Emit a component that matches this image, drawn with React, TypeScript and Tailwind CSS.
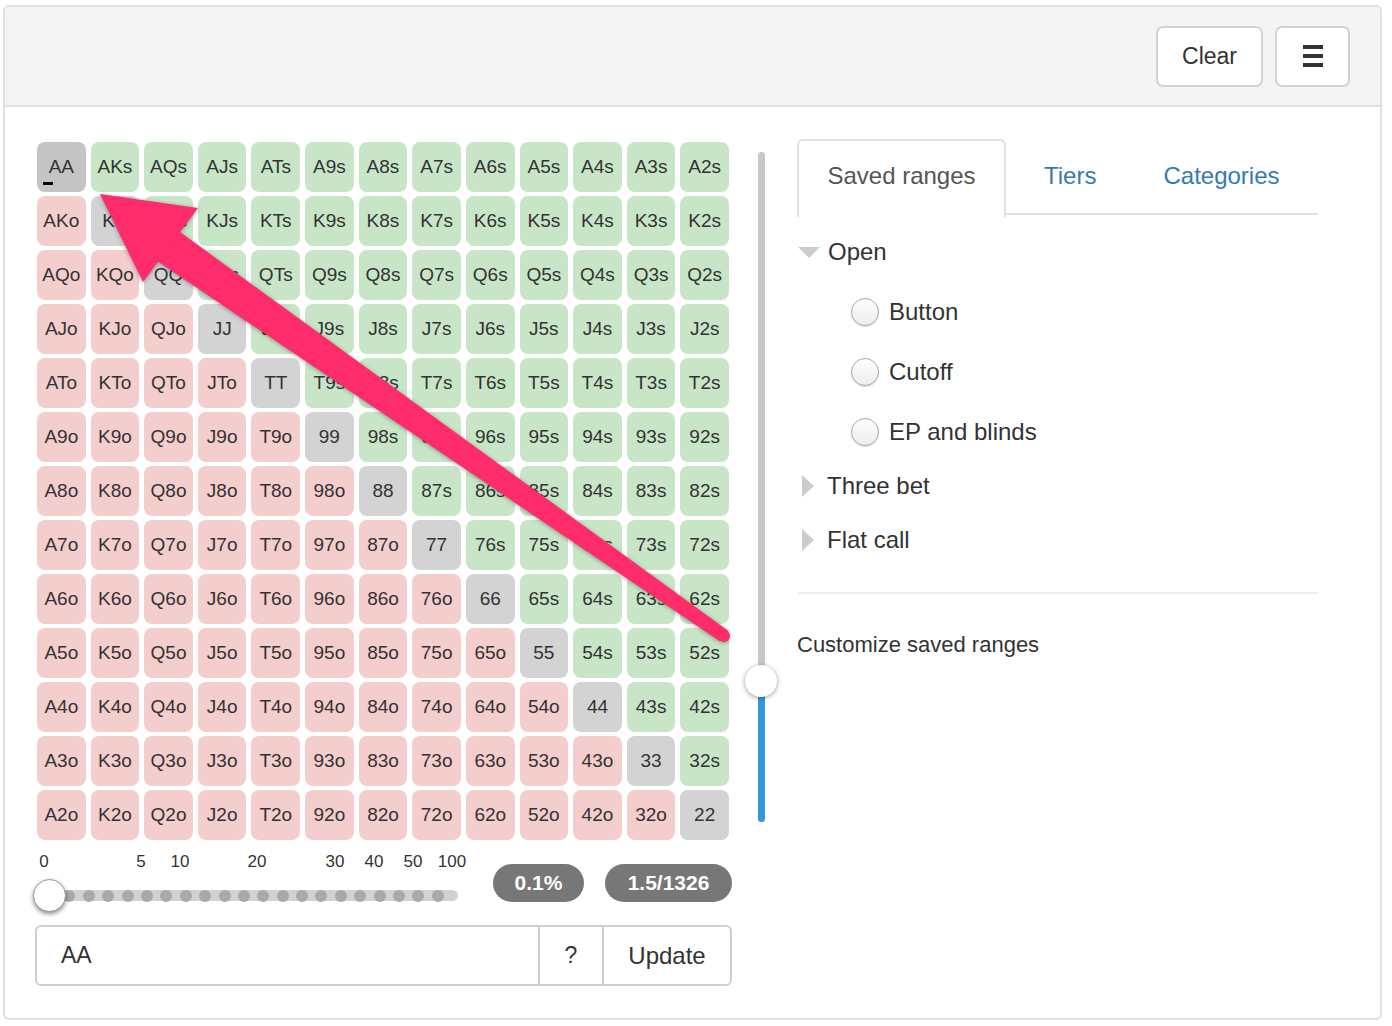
import React from 'react';

const RANKS = ['A', 'K', 'Q', 'J', 'T', '9', '8', '7', '6', '5', '4', '3', '2'];

const SCALE = [
  { label: '0', x: 9 },
  { label: '5', x: 106 },
  { label: '10', x: 145 },
  { label: '20', x: 222 },
  { label: '30', x: 300 },
  { label: '40', x: 339 },
  { label: '50', x: 378 },
  { label: '100', x: 417 },
];

const handLabel = (i: number, j: number) => {
  if (i === j) return RANKS[i] + RANKS[j];
  if (j > i) return RANKS[i] + RANKS[j] + 's';
  return RANKS[j] + RANKS[i] + 'o';
};

const cellColor = (i: number, j: number) => {
  if (i === 0 && j === 0) return 'bg-[#c4c4c4]';
  if (i === j) return 'bg-[#d3d3d3]';
  if (j > i) return 'bg-[#c8e5c8]';
  return 'bg-[#f4cdcd]';
};

const Radio: React.FC<{ label: string }> = ({ label }) => (
  <div className="h-[60px] flex items-center pl-[54px]">
    <span className="w-[28px] h-[28px] rounded-full border border-[#a8a8a8] bg-gradient-to-b from-white to-[#ececec] shadow-[0_1px_1px_rgba(0,0,0,0.15)]" />
    <span className="ml-[10px] text-[24px] text-[#333]">{label}</span>
  </div>
);

const App: React.FC = () => {
  return (
    <div className="relative w-[1392px] h-[1026px] bg-white overflow-hidden font-['Liberation_Sans',Arial,sans-serif] text-[#333]">
      <div className="ml-[3px] mt-[5px] w-[1379px] h-[1015px] border-2 border-[#e0e0e0] rounded-[6px] overflow-hidden">
        {/* Header */}
        <div className="h-[100px] bg-[#f4f4f4] border-b-2 border-[#dedede] flex items-center justify-end gap-[12px] pr-[30px]">
          <button className="w-[107px] h-[61px] bg-white border-2 border-[#d2d2d2] rounded-[7px] text-[23px] text-[#333]">
            Clear
          </button>
          <button className="w-[75px] h-[61px] bg-white border-2 border-[#d2d2d2] rounded-[7px] flex flex-col items-center justify-center gap-[5px]">
            <span className="w-[20px] h-[4px] bg-[#333]" />
            <span className="w-[20px] h-[4px] bg-[#333]" />
            <span className="w-[20px] h-[4px] bg-[#333]" />
          </button>
        </div>

        <div className="flex items-start pl-[30px] pt-[32px]">
          {/* Left column */}
          <div className="w-[697px] pt-[3px]">
            <div className="ml-[2px] w-[692px] grid grid-cols-13 gap-x-[5px] gap-y-[4px]">
              {RANKS.map((_, i) =>
                RANKS.map((__, j) => (
                  <div
                    key={`${i}-${j}`}
                    className={`relative h-[50px] rounded-[8px] flex items-center justify-center text-[19px] text-[#333] ${cellColor(i, j)}`}
                  >
                    {handLabel(i, j)}
                    {i === 0 && j === 0 && (
                      <span className="absolute left-[6px] top-[40px] w-[10px] h-[3px] bg-black" />
                    )}
                  </div>
                ))
              )}
            </div>

            {/* Range slider + badges */}
            <div className="mt-[12px] flex">
              <div className="relative w-[440px] h-[62px]">
                {SCALE.map(s => (
                  <span
                    key={s.label}
                    className="absolute top-0 -translate-x-1/2 text-[17px] leading-[20px] text-[#333]"
                    style={{ left: s.x }}
                  >
                    {s.label}
                  </span>
                ))}
                <div className="absolute left-[10px] top-[38px] w-[413px] h-[11px] rounded-full bg-[#d2d2d2]">
                  <div className="absolute left-[-1px] top-[-0.5px] flex gap-[7.4px]">
                    {Array.from({ length: 21 }).map((_, k) => (
                      <span key={k} className="w-[12px] h-[12px] rounded-full bg-[#a9a9a9]" />
                    ))}
                  </div>
                </div>
                <div className="absolute left-[-2px] top-[27px] w-[33px] h-[33px] rounded-full bg-white border border-[#999] shadow-[0_2px_4px_rgba(0,0,0,0.45)]" />
              </div>
              <div className="flex gap-[21px] ml-[19px] mt-[12px]">
                <span className="h-[38px] w-[91px] rounded-full bg-[#777] text-white font-bold text-[21px] flex items-center justify-center">
                  0.1%
                </span>
                <span className="h-[38px] w-[127px] rounded-full bg-[#777] text-white font-bold text-[21px] flex items-center justify-center">
                  1.5/1326
                </span>
              </div>
            </div>

            {/* Input group */}
            <div className="mt-[11px] w-[697px] h-[61px] flex border-2 border-[#d0d0d0] rounded-[6px] overflow-hidden">
              <div className="flex-1 flex items-center pl-[24px] text-[23px] text-[#333]">AA</div>
              <div className="w-[64px] border-l-2 border-[#d0d0d0] flex items-center justify-center text-[23px] text-[#333]">?</div>
              <div className="w-[128px] border-l-2 border-[#d0d0d0] flex items-center justify-center text-[24px] text-[#333]">Update</div>
            </div>
          </div>

          {/* Vertical slider */}
          <div className="relative w-[32px] ml-[13px] mt-[13px] h-[670px] flex justify-center">
            <div className="w-[7px] h-full rounded-full bg-[#c8c8c8] overflow-hidden flex flex-col">
              <div className="h-[529px]" />
              <div className="flex-1 bg-[#3498db]" />
            </div>
            <div className="absolute left-0 top-[513px] w-[32px] h-[32px] rounded-full bg-white shadow-[0_1px_5px_rgba(0,0,0,0.4)]" />
          </div>

          {/* Right panel */}
          <div className="ml-[20px] w-[521px]">
            <div className="flex h-[76px] border-b-2 border-[#e0e0e0]">
              <div className="w-[209px] h-[78px] border-2 border-b-0 border-[#e0e0e0] rounded-t-[6px] bg-white flex items-center justify-center whitespace-nowrap text-[24px] text-[#555] -mb-[2px] pb-[6px]">
                Saved ranges
              </div>
              <div className="ml-[5px] px-[33px] flex items-center whitespace-nowrap text-[24px] text-[#337ab7]">Tiers</div>
              <div className="ml-[1px] px-[33px] flex items-center whitespace-nowrap text-[24px] text-[#337ab7]">Categories</div>
            </div>

            <div className="mt-[10px]">
              <div className="h-[54px] flex items-center">
                <svg width="22" height="11" viewBox="0 0 22 11" className="ml-[1px]">
                  <path d="M0 0 L22 0 L11 11 Z" fill="#cccccc" />
                </svg>
                <span className="ml-[8px] text-[24px] text-[#333]">Open</span>
              </div>
              <div className="pt-[3px]">
                <Radio label="Button" />
                <Radio label="Cutoff" />
                <Radio label="EP and blinds" />
              </div>
              <div className="h-[48px] flex items-center">
                <svg width="12" height="22" viewBox="0 0 12 22" className="ml-[5px]">
                  <path d="M0 0 L12 11 L0 22 Z" fill="#cccccc" />
                </svg>
                <span className="ml-[13px] text-[24px] text-[#333]">Three bet</span>
              </div>
              <div className="h-[60px] flex items-center">
                <svg width="12" height="22" viewBox="0 0 12 22" className="ml-[5px]">
                  <path d="M0 0 L12 11 L0 22 Z" fill="#cccccc" />
                </svg>
                <span className="ml-[13px] text-[24px] text-[#333]">Flat call</span>
              </div>
            </div>

            <div className="mt-[22px] h-[2px] bg-[#eeeeee]" />
            <div className="mt-[34px] text-[22px] text-[#333]">Customize saved ranges</div>
          </div>
        </div>
      </div>

      {/* Annotation arrow */}
      <svg
        className="absolute left-0 top-0 pointer-events-none drop-shadow-[0_1px_2px_rgba(0,0,0,0.35)]"
        width="1392"
        height="1026"
        viewBox="0 0 1392 1026"
      >
        <polygon points="147,254 169,224 728.5,631 719.5,641" fill="#fe2c6a" />
        <circle cx="724" cy="636" r="6" fill="#fe2c6a" />
        <polygon points="100,194 198,208 143,282" fill="#fe2c6a" />
      </svg>
    </div>
  );
};

export default App;
